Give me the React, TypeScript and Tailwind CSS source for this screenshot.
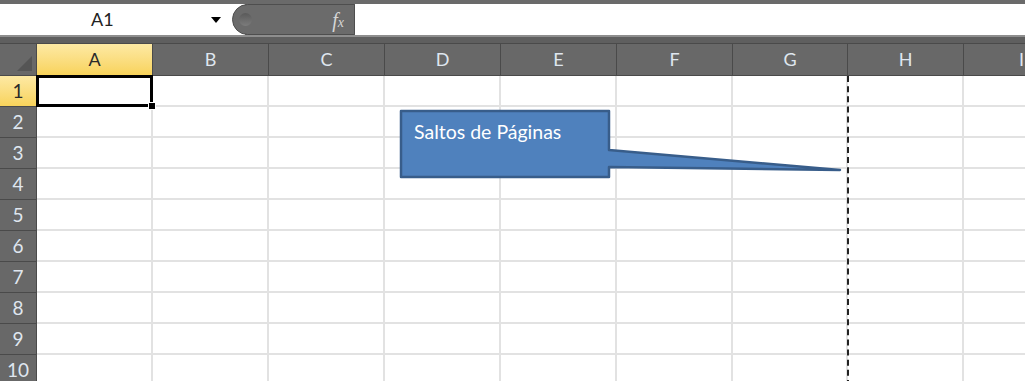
import React from "react";

const COLS = ["A", "B", "C", "D", "E", "F", "G", "H", "I"];
const ROWS = [1, 2, 3, 4, 5, 6, 7, 8, 9, 10];

function ColHeader({ label }: { label: string }) {
  const active = label === "A";
  return (
    <div
      className={`flex h-[33px] items-center justify-center border-r border-b border-t border-[#4a4a4a] text-[18px] ${
        active
          ? "bg-gradient-to-b from-[#fde9a3] to-[#f8d35a] text-[#2a2a2a]"
          : "bg-[#686868] text-[#dfe6ef]"
      }`}
    >
      {label}
    </div>
  );
}

function RowHeader({ n }: { n: number }) {
  const active = n === 1;
  return (
    <div
      className={`flex h-[31px] items-center justify-center border-r border-b border-[#4a4a4a] text-[19px] ${
        active
          ? "bg-gradient-to-b from-[#fde9a3] to-[#f8d35a] text-[#2a2a2a]"
          : "bg-[#686868] text-[#dfe6ef]"
      }`}
    >
      {n}
    </div>
  );
}

export default function App() {
  return (
    <div className="relative h-[381px] w-[1025px] overflow-hidden bg-white font-['Lato',sans-serif]">
      {/* name box + formula bar */}
      <div className="flex h-[35px] items-end bg-[#6a6a6a]">
        <div className="flex h-[31px] w-[245px] items-center bg-white">
          <span className="ml-[91px] text-[18px] text-[#222]">A1</span>
          <span className="ml-auto mr-[24px] h-0 w-0 border-x-[5px] border-t-[6px] border-x-transparent border-t-black" />
        </div>
        <div className="-ml-[13px] flex h-[31px] w-[123px] items-center rounded-l-full border border-[#4e4e4e] bg-[#6b6b6b]">
          <div className="ml-[6px] h-[13px] w-[13px] rounded-full bg-gradient-to-b from-[#5a5a5a] to-[#7c7c7c]" />
          <span className="ml-auto mr-[10px] font-['Liberation_Serif',serif] text-[20px] italic text-[#d6d6d6]">
            f<span className="text-[14px]">x</span>
          </span>
        </div>
        <div className="h-[31px] flex-1 bg-white" />
      </div>
      <div className="h-[8px] border-t-2 border-[#8e8e8e] bg-[#5f5f5f]" />

      {/* grid */}
      <div className="grid grid-cols-[37px_116px_116px_116px_116px_116px_116px_115px_116px_116px]">
        <div className="relative h-[33px] border-r border-b border-t border-[#4a4a4a] bg-[#686868]">
          <div className="absolute bottom-[4px] right-[4px] h-0 w-0 border-t-[15px] border-t-transparent border-r-[15px] border-r-[#555]" />
        </div>
        {COLS.map((c) => (
          <ColHeader key={c} label={c} />
        ))}
        {ROWS.map((r) => (
          <React.Fragment key={r}>
            <RowHeader n={r} />
            {COLS.map((c) => (
              <div
                key={c}
                className={`relative h-[31px] border-r-2 border-b-2 border-[#e2e2e2] ${
                  r === 1 && c === "A" ? "z-10" : ""
                }`}
              >
                {r === 1 && c === "A" && (
                  <>
                    <div className="absolute -left-[1px] -top-[1px] h-[32px] w-[117px] border-[3px] border-black" />
                    <div className="absolute -bottom-[5px] -right-[5px] h-[8px] w-[8px] border border-white bg-black" />
                  </>
                )}
              </div>
            ))}
          </React.Fragment>
        ))}
      </div>

      {/* page break */}
      <div className="absolute left-[847px] top-[76px] h-[310px] border-l-2 border-dashed border-[#222]" />

      {/* callout */}
      <svg
        className="pointer-events-none absolute left-0 top-0"
        width="1025"
        height="381"
      >
        <path
          d="M401 111 H609 V150 L840 170 L609 167 V177 H401 Z"
          fill="#4f81bd"
          stroke="#385d8a"
          strokeWidth="2.5"
          strokeLinejoin="round"
        />
      </svg>
      <div className="absolute left-[414px] top-[119px] text-[19.5px] leading-[26px] text-white">
        Saltos de Páginas
      </div>
    </div>
  );
}
